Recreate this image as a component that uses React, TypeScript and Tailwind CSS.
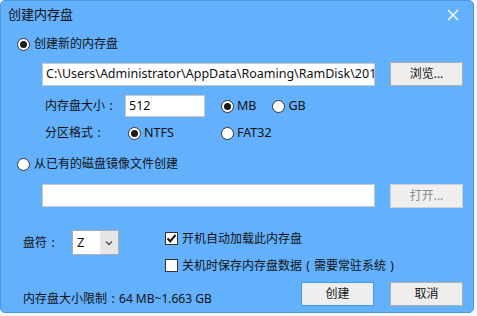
import React from "react";

const FONT = '"Noto Sans", "Noto Sans CJK SC", sans-serif';

function Radio({ checked }: { checked?: boolean }) {
  return (
    <span className="w-[13px] h-[13px] rounded-full bg-white border border-[#333] flex items-center justify-center shrink-0">
      {checked && <span className="w-[7px] h-[7px] rounded-full bg-[#1a1a1a]" />}
    </span>
  );
}

function Check({ checked }: { checked?: boolean }) {
  return (
    <span className="w-[13px] h-[13px] bg-white border border-[#333] flex items-center justify-center shrink-0">
      {checked && (
        <svg width="11" height="11" viewBox="0 0 11 11">
          <path d="M1.5 5.5 L4.2 8.3 L9.5 2" stroke="#111" strokeWidth="2" fill="none" />
        </svg>
      )}
    </span>
  );
}

function Btn({ children, disabled, primary }: { children: React.ReactNode; disabled?: boolean; primary?: boolean }) {
  return (
    <div
      className={
        "w-[73px] h-[24px] flex items-center justify-center text-[12px] border " +
        (primary
          ? "border-[#3c9cf0] bg-[#eeeeee] text-[#111]"
          : disabled
          ? "border-[#d0d0d0] bg-[#efefef] text-[#8a8a8a]"
          : "border-[#adadad] bg-[#eeeeee] text-[#111]")
      }
    >
      {children}
    </div>
  );
}

function Colon() {
  return <span className="inline-block w-[12px] text-center">:</span>;
}

function Paren({ c }: { c: string }) {
  return <span className="inline-block w-[12px] text-center">{c}</span>;
}

export default function App() {
  return (
    <div className="w-[477px] h-[316px] bg-[#f4f8fc]" style={{ fontFamily: FONT }}>
      <div className="w-[474px] h-[313px] bg-[#63b1fc] border border-[#4d97e0] rounded-[5px] flex flex-col text-[12px] text-[#111]">
        {/* title bar */}
        <div className="h-[28px] flex items-center justify-between pl-[7px] pr-[14px]">
          <span className="text-[13px] text-[#111]">创建内存盘</span>
          <svg width="12" height="12" viewBox="0 0 12 12">
            <path d="M1 1 L11 11 M11 1 L1 11" stroke="#f4f8fc" strokeWidth="1.6" />
          </svg>
        </div>
        {/* body */}
        <div className="flex flex-col pl-[16px] pr-[10px]">
          <div className="h-[16px] mt-[7px] flex items-center gap-[4px]">
            <Radio checked />
            <span>创建新的内存盘</span>
          </div>
          <div className="mt-[10px] flex items-center pl-[25px]">
            <div className="w-[333px] h-[23px] bg-white border border-[#c8c8c8] flex items-center px-[3px] overflow-hidden whitespace-nowrap text-[12.5px]">
              C:\Users\Administrator\AppData\Roaming\RamDisk\201
            </div>
            <div className="ml-[15px]">
              <Btn>浏览...</Btn>
            </div>
          </div>
          <div className="mt-[9px] h-[22px] flex items-center pl-[28px]">
            <span className="w-[80px]">
              内存盘大小
              <Colon />
            </span>
            <div className="w-[80px] h-[22px] bg-white border border-[#c8c8c8] flex items-center px-[3px] text-[12.5px]">512</div>
            <div className="ml-[16px] flex items-center gap-[3px]">
              <Radio checked />
              <span className="text-[12.5px]">MB</span>
            </div>
            <div className="ml-[16px] flex items-center gap-[3px]">
              <Radio />
              <span className="text-[12.5px]">GB</span>
            </div>
          </div>
          <div className="mt-[8px] h-[16px] flex items-center pl-[28px]">
            <span className="w-[83px]">
              分区格式
              <Colon />
            </span>
            <div className="flex items-center gap-[3px] w-[93px]">
              <Radio checked />
              <span className="text-[12.5px]">NTFS</span>
            </div>
            <div className="flex items-center gap-[3px]">
              <Radio />
              <span className="text-[12.5px]">FAT32</span>
            </div>
          </div>
          <div className="mt-[15px] h-[16px] flex items-center gap-[4px]">
            <Radio />
            <span>从已有的磁盘镜像文件创建</span>
          </div>
          <div className="mt-[11px] flex items-center pl-[25px]">
            <div className="w-[333px] h-[23px] bg-white border border-[#c8c8c8]" />
            <div className="ml-[15px] mt-[1px]">
              <Btn disabled>打开...</Btn>
            </div>
          </div>
          <div className="mt-[22px] flex items-start pl-[6px]">
            <div className="flex items-center h-[25px]">
              <span className="w-[49px]">
                盘符
                <Colon />
              </span>
              <div className="w-[47px] h-[25px] border border-[#acacac] flex">
                <div className="flex-1 bg-white flex items-center pl-[4px] text-[13px]">Z</div>
                <div className="w-[18px] bg-[#e6e6e6] flex items-center justify-center">
                  <svg width="8" height="6" viewBox="0 0 8 6">
                    <path d="M1 1.5 L4 4.5 L7 1.5" stroke="#555" strokeWidth="1.5" fill="none" />
                  </svg>
                </div>
              </div>
            </div>
            <div className="ml-[46px] flex flex-col">
              <div className="mt-[2px] h-[13px] flex items-center gap-[4px]">
                <Check checked />
                <span>开机自动加载此内存盘</span>
              </div>
              <div className="mt-[14px] h-[13px] flex items-center gap-[4px]">
                <Check />
                <span className="whitespace-nowrap">
                  关机时保存内存盘数据
                  <Paren c="(" />
                  需要常驻系统
                  <Paren c=")" />
                </span>
              </div>
            </div>
          </div>
          <div className="mt-[10px] flex items-start pl-[6px]">
            <span className="mt-[8px] w-[278px]">
              内存盘大小限制
              <Colon />
              64 MB~1.663 GB
            </span>
            <Btn primary>创建</Btn>
            <div className="ml-[16px]">
              <Btn>取消</Btn>
            </div>
          </div>
        </div>
      </div>
    </div>
  );
}
